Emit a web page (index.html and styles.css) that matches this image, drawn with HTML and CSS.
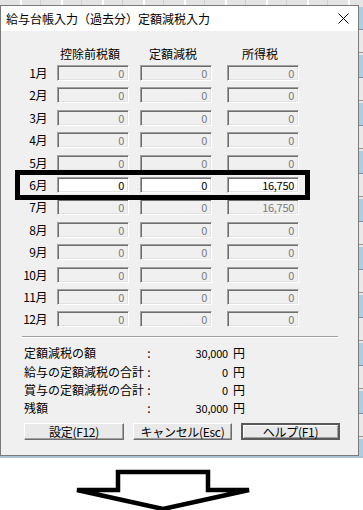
FILE: index.html
```html
<!DOCTYPE html>
<html lang="ja">
<head>
<meta charset="utf-8">
<title>定額減税入力</title>
<link rel="stylesheet" href="styles.css">
</head>
<body>
<div class="screen">
  <div class="top-strip"></div>
  <div class="main-row">
    <div class="window">
      <div class="titlebar">
        <span class="title">給与台帳入力（過去分）定額減税入力</span>
        <svg class="close" width="11" height="11" viewBox="0 0 11 11"><path d="M0.5 0.5 L10.5 10.5 M10.5 0.5 L0.5 10.5" stroke="#000" stroke-width="1" fill="none"/></svg>
      </div>
      <div class="client">
        <div class="headers">
          <div class="hdr">控除前税額</div>
          <div class="hdr">定額減税</div>
          <div class="hdr">所得税</div>
        </div>
        <div class="grid">
          <div class="mon">1月</div><div class="fld">0</div><div class="fld">0</div><div class="fld">0</div>
          <div class="mon">2月</div><div class="fld">0</div><div class="fld">0</div><div class="fld">0</div>
          <div class="mon">3月</div><div class="fld">0</div><div class="fld">0</div><div class="fld">0</div>
          <div class="mon">4月</div><div class="fld">0</div><div class="fld">0</div><div class="fld">0</div>
          <div class="mon">5月</div><div class="fld">0</div><div class="fld">0</div><div class="fld">0</div>
          <div class="mon">6月</div><div class="fld active">0</div><div class="fld active">0</div><div class="fld active">16,750</div>
          <div class="mon">7月</div><div class="fld">0</div><div class="fld">0</div><div class="fld">16,750</div>
          <div class="mon">8月</div><div class="fld">0</div><div class="fld">0</div><div class="fld">0</div>
          <div class="mon">9月</div><div class="fld">0</div><div class="fld">0</div><div class="fld">0</div>
          <div class="mon">10月</div><div class="fld">0</div><div class="fld">0</div><div class="fld">0</div>
          <div class="mon">11月</div><div class="fld">0</div><div class="fld">0</div><div class="fld">0</div>
          <div class="mon">12月</div><div class="fld">0</div><div class="fld">0</div><div class="fld">0</div>
        </div>
        <div class="sep"></div>
        <div class="summary">
          <div class="lbl">定額減税の額</div><div class="colon">:</div><div class="val">30,000</div><div class="yen">円</div>
          <div class="lbl">給与の定額減税の合計</div><div class="colon">:</div><div class="val">0</div><div class="yen">円</div>
          <div class="lbl">賞与の定額減税の合計</div><div class="colon">:</div><div class="val">0</div><div class="yen">円</div>
          <div class="lbl">残額</div><div class="colon">:</div><div class="val">30,000</div><div class="yen">円</div>
        </div>
        <div class="buttons">
          <div class="btn w100">設定(F12)</div>
          <div class="btn">キャンセル(Esc)</div>
          <div class="btn focus">ヘルプ(F1)</div>
        </div>
      </div>
      <div class="highlight"></div>
    </div>
    <div class="side-strip"></div>
  </div>
  <div class="shadow-line"></div>
  <div class="arrow-area">
    <svg width="363" height="52" viewBox="0 0 363 52">
      <polygon points="118,14 208,14 208,32 249,32 163,51 77,32 118,32" fill="#fff" stroke="#000" stroke-width="4.5" stroke-linejoin="miter"/>
    </svg>
  </div>
</div>
</body>
</html>
```

FILE: styles.css
```css
* { box-sizing: border-box; }
html, body { margin: 0; padding: 0; }
body {
  width: 363px;
  height: 510px;
  overflow: hidden;
  background: #fff;
  font-family: "Noto Sans CJK JP", "Noto Sans", sans-serif;
  font-size: 12px;
  color: #000;
}
.screen { width: 363px; height: 510px; display: flex; flex-direction: column; }
.top-strip {
  height: 5px;
  background: repeating-linear-gradient(90deg, #e4e4e4 0 20px, #ffffff 20px 22px, #e4e4e4 22px 40px, #cfcfcf 40px 41px);
}
.main-row { display: flex; height: 451px; }
.window {
  position: relative;
  width: 359px;
  height: 451px;
  border: 1px solid #7a7a7a;
  background: #f0f0f0;
  display: flex;
  flex-direction: column;
}
.side-strip {
  flex: 1;
  background: repeating-linear-gradient(180deg, #e6e6e6 0 2px, #a9cfe3 2px 24px, #8e8e8e 24px 25px, #e9e9e9 25px 47px, #9a9a9a 47px 48px);
}
.titlebar {
  height: 25px;
  background: #fff;
  display: flex;
  align-items: center;
  justify-content: space-between;
  padding: 0 9px 0 5px;
}
.title { font-size: 12px; line-height: 14px; }
.close { display: block; }
.client {
  flex: 1;
  padding-top: 16px;
  display: flex;
  flex-direction: column;
}
.headers {
  display: grid;
  grid-template-columns: 83px 87px 72px;
  margin-left: 56px;
  height: 14px;
  margin-bottom: 4px;
}
.hdr {
  width: 72px;
  padding-right: 6px;
  line-height: 14px;
  font-size: 12px;
  text-align: center;
}
.grid {
  display: grid;
  grid-template-columns: 56px 83px 87px 72px;
  grid-auto-rows: 16px;
  row-gap: 6.4px;
}
.mon {
  font-size: 12px;
  line-height: 16px;
  text-align: right;
  padding-right: 10px;
  letter-spacing: -0.5px;
}
.fld {
  width: 72px;
  height: 16px;
  border: 1px solid;
  border-color: #a0a0a0 #ffffff #ffffff #a0a0a0;
  box-shadow: inset 1px 1px 0 #6d6d6d, inset -1px -1px 0 #e3e3e3;
  background: #f0f0f0;
  color: #7a7a7a;
  font-size: 11px;
  line-height: 14px;
  text-align: right;
  padding-right: 4px;
  letter-spacing: -0.3px;
}
.fld.active {
  background: #fff;
  color: #000;
}
.sep {
  margin: 9px 20px 0 21px;
  height: 2px;
  border-top: 1px solid #a0a0a0;
  border-bottom: 1px solid #ffffff;
}
.summary {
  margin-top: 6px;
  padding-left: 23px;
  display: grid;
  grid-template-columns: 122px 6px 76px 17px;
  grid-auto-rows: 18.3px;
  align-items: center;
}
.lbl, .colon, .yen { font-size: 12px; line-height: 18px; }
.colon { text-align: center; }
.val { text-align: right; font-size: 11px; line-height: 18px; letter-spacing: -0.2px; }
.yen { text-align: right; }
.buttons {
  margin-top: 6px;
  padding-left: 23px;
  display: flex;
  gap: 9px;
}
.btn {
  width: 99px;
  height: 17px;
  background: #e9e9e9;
  border: 1px solid;
  border-color: #ffffff #6d6d6d #6d6d6d #ffffff;
  box-shadow: inset -1px -1px 0 #a0a0a0;
  font-size: 12px;
  line-height: 15px;
  text-align: center;
  letter-spacing: -0.3px;
}
.btn.w100 { width: 100px; }
.btn.focus {
  border: 2px solid #5a5a5a;
  box-shadow: inset 1px 1px 0 #ffffff, inset -1px -1px 0 #a0a0a0;
  line-height: 13px;
}
.highlight {
  position: absolute;
  left: 14px;
  top: 164px;
  width: 295px;
  height: 30px;
  border: 5px solid #000;
}
.shadow-line { height: 2px; background: #a9c3d2; }
.arrow-area { height: 52px; }
.arrow-area svg { display: block; }
```
